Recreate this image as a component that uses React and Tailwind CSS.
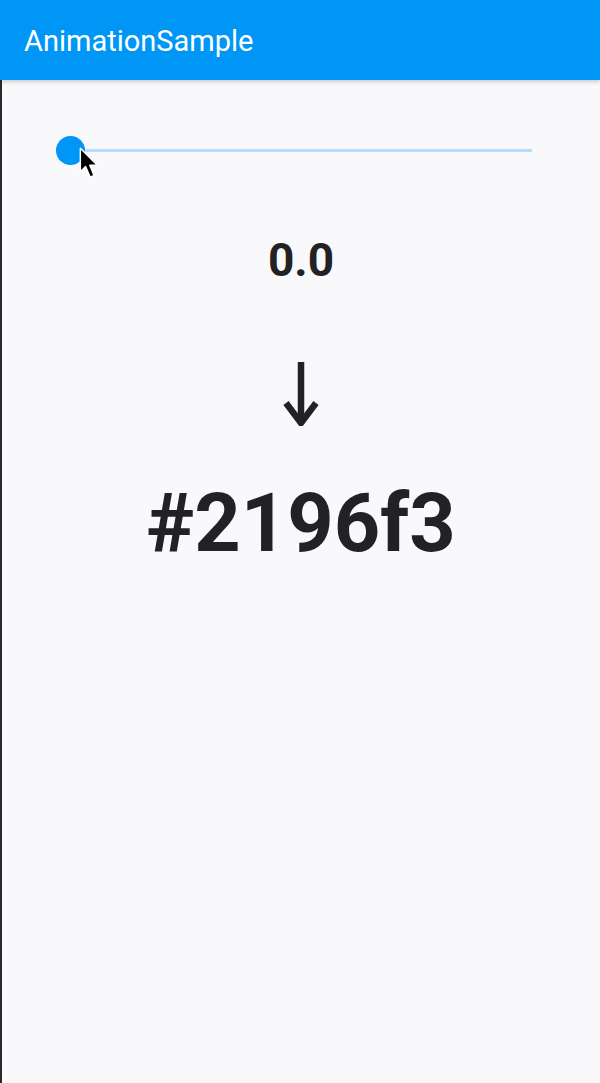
import React from "react";

export default function App() {
  return (
    <div className="w-[600px] h-[1083px] bg-[#f9f8fa] flex flex-col font-['Roboto',sans-serif] border-l-2 border-[#2a2a2a]">
      {/* app bar */}
      <div className="h-[80px] bg-[#0096f6] flex items-center pl-[24px] pt-[2px] shadow-[0_2px_4px_rgba(0,0,0,0.18)] -ml-[2px] z-10">
        <span className="text-white text-[29px] leading-none">AnimationSample</span>
      </div>

      {/* slider */}
      <div className="relative h-[40px] mt-[52px] mx-[54px]">
        <div className="absolute left-[14px] right-[14px] top-[17px] h-[3px] bg-[#b6dcfa]" />
        <div className="absolute left-0 top-[4px] w-[29px] h-[29px] rounded-full bg-[#0096f6]" />
        <svg className="absolute left-[23px] top-[15px]" width="21" height="34" viewBox="0 0 16 26">
          <path d="M1 1 L1 19 L5 15 L8.5 23 L11.5 21.8 L8.2 14 L14 14 Z" fill="#000" stroke="#fff" strokeWidth="1.1" strokeLinejoin="round" />
        </svg>
      </div>

      <div className="flex flex-col items-center text-[#222124]">
        <div className="mt-[65px] text-[46px] font-bold leading-none">0.0</div>
        <div className="mt-[77px]">
          <svg width="36" height="66" viewBox="0 0 36 66">
            <path d="M18 2 V58" stroke="#222124" strokeWidth="6.5" />
            <path d="M3 43 L18 63 L33 43" fill="none" stroke="#222124" strokeWidth="6.5" strokeLinejoin="miter" />
          </svg>
        </div>
        <div className="mt-[57px] text-[81px] font-bold leading-none">#2196f3</div>
      </div>
    </div>
  );
}
